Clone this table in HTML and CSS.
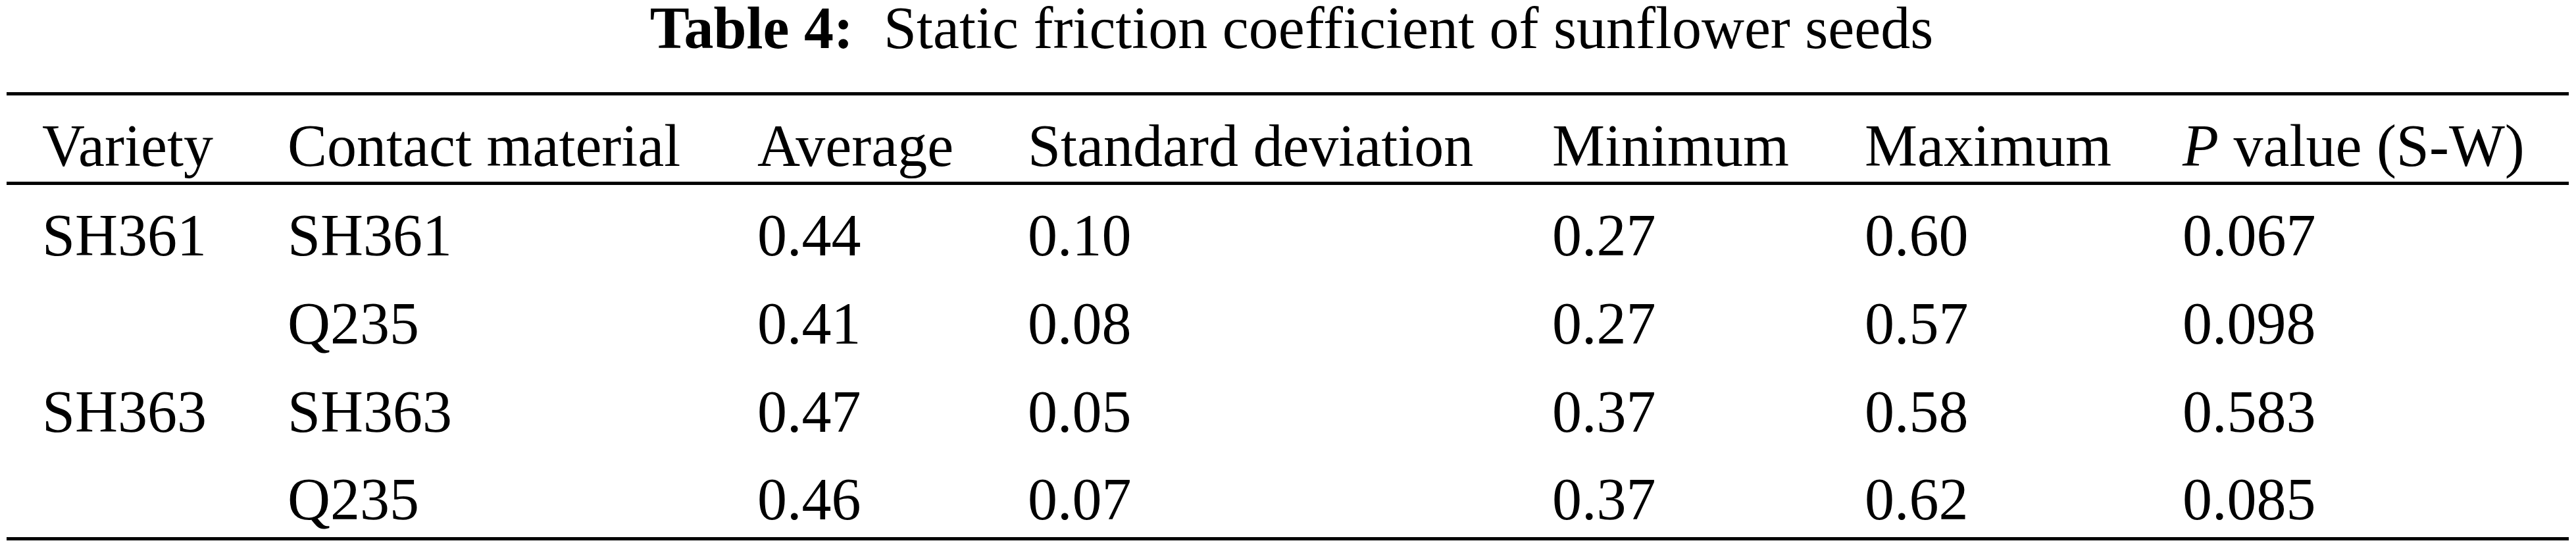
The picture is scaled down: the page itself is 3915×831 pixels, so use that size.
FILE: index.html
```html
<!DOCTYPE html>
<html lang="en">
<head>
    <meta charset="UTF-8">
    <title>Table 4: Static friction coefficient of sunflower seeds</title>
    <link rel="stylesheet" href="styles.css">
</head>
<body>

    <div class="wrap">
        <table class="data-table">
            <caption><b>Table 4:</b><span class="cap-gap"></span>Static friction coefficient of sunflower seeds</caption>
            <colgroup>
                <col class="c-variety">
                <col class="c-material">
                <col class="c-avg">
                <col class="c-sd">
                <col class="c-min">
                <col class="c-max">
                <col class="c-p">
            </colgroup>
            <thead>
                <tr>
                    <th>Variety</th>
                    <th>Contact material</th>
                    <th>Average</th>
                    <th>Standard deviation</th>
                    <th>Minimum</th>
                    <th>Maximum</th>
                    <th><i>P</i> value (S-W)</th>
                </tr>
            </thead>
            <tbody>
                <tr>
                    <td>SH361</td>
                    <td>SH361</td>
                    <td>0.44</td>
                    <td>0.10</td>
                    <td>0.27</td>
                    <td>0.60</td>
                    <td>0.067</td>
                </tr>
                <tr>
                    <td></td>
                    <td>Q235</td>
                    <td>0.41</td>
                    <td>0.08</td>
                    <td>0.27</td>
                    <td>0.57</td>
                    <td>0.098</td>
                </tr>
                <tr>
                    <td>SH363</td>
                    <td>SH363</td>
                    <td>0.47</td>
                    <td>0.05</td>
                    <td>0.37</td>
                    <td>0.58</td>
                    <td>0.583</td>
                </tr>
                <tr>
                    <td></td>
                    <td>Q235</td>
                    <td>0.46</td>
                    <td>0.07</td>
                    <td>0.37</td>
                    <td>0.62</td>
                    <td>0.085</td>
                </tr>
            </tbody>
        </table>
    </div>

</body>
</html>
```

FILE: styles.css
```css
body {
    font-family: "Liberation Serif", "Times New Roman", serif;
    background-color: white;
    color: black;
    margin: 0;
    padding: 0;
}

.wrap {
    padding: 0 11px 0 10px;
}

.data-table {
    width: 3894px;
    table-layout: fixed;
    border-collapse: separate;
    border-spacing: 0;
    font-size: 90px;
}

    .data-table caption {
        line-height: 86px;
        padding: 0 0 54px 12px;
        text-align: center;
        white-space: nowrap;
    }

    .cap-gap {
        display: inline-block;
        width: 46px;
    }

    .data-table th,
    .data-table td {
        text-align: left;
        font-weight: normal;
        line-height: 100px;
        padding: 27px 0 6.75px 0;
        white-space: nowrap;
    }

    .data-table th {
        padding-bottom: 4px;
        border-top: 5px solid black;
        border-bottom: 5px solid black;
    }

    .data-table tbody tr:last-child td {
        border-bottom: 5px solid black;
    }

        .data-table th:first-child,
        .data-table td:first-child {
            padding-left: 54px;
        }

/* column widths */
.c-variety { width: 427px; }
.c-material { width: 714px; }
.c-avg { width: 411px; }
.c-sd { width: 797px; }
.c-min { width: 475px; }
.c-max { width: 483px; }
.c-p { width: 587px; }
```
